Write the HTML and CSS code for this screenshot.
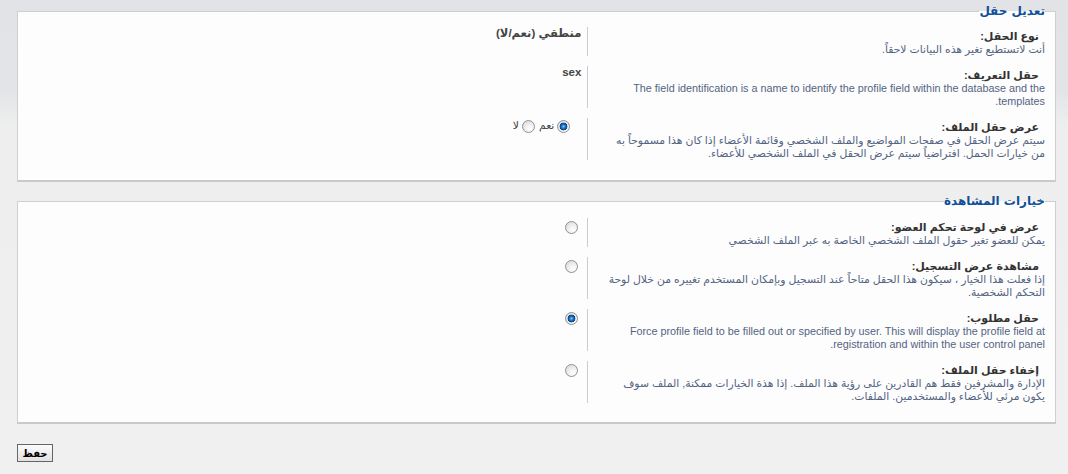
FILE: index.html
```html
<!DOCTYPE html>
<html lang="ar" dir="rtl">
<head>
<meta charset="utf-8">
<title>تعديل حقل</title>
<link rel="stylesheet" href="styles.css">
</head>
<body>
<form class="page">
  <fieldset class="box">
    <legend>تعديل حقل</legend>
    <dl class="row">
      <dt><label>نوع الحقل:</label><span class="explain">أنت لاتستطيع تغير هذه البيانات لاحقاً.</span></dt>
      <dd><strong>منطقي (نعم/لا)</strong></dd>
    </dl>
    <dl class="row">
      <dt><label>حقل التعريف:</label><span class="explain">The field identification is a name to identify the profile field within the database and the templates.</span></dt>
      <dd><strong>sex</strong></dd>
    </dl>
    <dl class="row">
      <dt><label>عرض حقل الملف:</label><span class="explain">سيتم عرض الحقل في صفحات المواضيع والملف الشخصي وقائمة الأعضاء إذا كان هذا مسموحاً به<br>من خيارات الحمل. افتراضياً سيتم عرض الحقل في الملف الشخصي للأعضاء.</span></dt>
      <dd class="choices">
        <label class="choice"><input type="radio" class="radio" name="show" checked> نعم</label>
        <label class="choice"><input type="radio" class="radio" name="show"> لا</label>
      </dd>
    </dl>
  </fieldset>

  <fieldset class="box">
    <legend>خيارات المشاهدة</legend>
    <dl class="row">
      <dt><label>عرض في لوحة تحكم العضو:</label><span class="explain">يمكن للعضو تغير حقول الملف الشخصي الخاصة به عبر الملف الشخصي</span></dt>
      <dd><input type="radio" class="radio" name="ucp"></dd>
    </dl>
    <dl class="row">
      <dt><label>مشاهدة عرض التسجيل:</label><span class="explain">إذا فعلت هذا الخيار ، سيكون هذا الحقل متاحاً عند التسجيل وبإمكان المستخدم تغييره من خلال لوحة<br>التحكم الشخصية.</span></dt>
      <dd><input type="radio" class="radio" name="reg"></dd>
    </dl>
    <dl class="row">
      <dt><label>حقل مطلوب:</label><span class="explain">Force profile field to be filled out or specified by user. This will display the profile field at registration and within the user control panel.</span></dt>
      <dd><input type="radio" class="radio" name="req" checked></dd>
    </dl>
    <dl class="row">
      <dt><label>إخفاء حقل الملف:</label><span class="explain">الإدارة والمشرفين فقط هم القادرين على رؤية هذا الملف. إذا هذة الخيارات ممكنة, الملف سوف<br>يكون مرئي للأعضاء والمستخدمين. الملفات.</span></dt>
      <dd><input type="radio" class="radio" name="hide"></dd>
    </dl>
  </fieldset>

  <div class="submit">
    <input type="submit" class="button" value="حفظ">
  </div>
</form>
</body>
</html>
```

FILE: styles.css
```css
html, body {
  margin: 0;
  padding: 0;
}

body {
  min-height: 474px;
  background: linear-gradient(to bottom, #e1e3e7 0, #e3e4e8 90px, #edeeed 125px, #f0f0f0 100%);
  font-family: "Liberation Sans", "DejaVu Sans", sans-serif;
  font-size: 10.8px;
  color: #333;
}

.page {
  padding: 3px 12px 0 17px;
}

.box {
  margin: 0 0 11px;
  padding: 8px 10px 10px;
  border: 1px solid #cfcfcf;
  border-bottom: 2px solid #c9c9c9;
  background: #fdfdfd;
  min-width: 0;
}

.box + .box {
  padding-top: 9px;
  padding-bottom: 9px;
}

.box legend {
  padding: 0;
  font-family: "DejaVu Sans", sans-serif;
  font-size: 12px;
  font-weight: bold;
  line-height: 16px;
  color: #115098;
}

.row {
  display: flex;
  margin: 0 0 10px;
}

.row dt {
  flex: 0 0 45%;
  box-sizing: border-box;
  border-left: 1px solid #cccccc;
  padding-top: 3px;
  line-height: 13px;
}

.row dt label {
  display: block;
  padding-right: 6px;
  font-size: 11px;
  font-weight: bold;
  color: #333;
}

.explain {
  display: block;
  color: #536482;
}

.row dd {
  flex: 1;
  margin: 0;
  padding-right: 6px;
  line-height: 13px;
  color: #444;
}

.row dd strong {
  font-size: 11.5px;
}

.choices {
  display: flex;
  align-items: center;
  align-self: flex-start;
  gap: 4px;
}

.choice {
  display: inline-flex;
  align-items: center;
  gap: 3px;
}

.choice:first-child {
  margin-right: 11px;
}

.radio {
  appearance: none;
  -webkit-appearance: none;
  box-sizing: border-box;
  width: 13px;
  height: 13px;
  margin: 3px 3px 0 5px;
  border: 1px solid #8e9396;
  border-radius: 50%;
  background: radial-gradient(circle at 65% 70%, #ffffff 0, #f2f2f2 35%, #d2d4d6 100%);
}

.choice .radio {
  margin: 2px 0 0 0;
}

.radio:checked {
  background:
    radial-gradient(circle at 50% 50%, #7fd0ff 0, #1e84d8 1.6px, #0b3f7a 3.6px, rgba(11, 63, 122, 0) 4.2px),
    radial-gradient(circle at 65% 70%, #ffffff 0, #f2f2f2 35%, #d2d4d6 100%);
}

.submit {
  margin-top: 20px;
  text-align: left;
}

.button {
  width: 36px;
  height: 18px;
  padding: 0;
  border: 1px solid #666;
  background: linear-gradient(to bottom, #fbfbfb, #e2e2e2);
  font-family: "DejaVu Sans", sans-serif;
  font-size: 10px;
  font-weight: bold;
  color: #000;
}
```
